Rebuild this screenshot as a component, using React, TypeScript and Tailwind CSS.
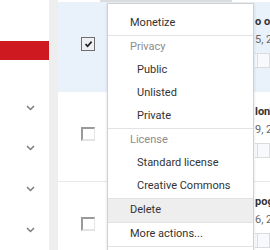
const rows = [
  { title: "o o", date: "5, 2", selected: true, checked: true },
  { title: "lon'", date: "9, 2", selected: false, checked: false },
  { title: "pog", date: "6, 2", selected: false, checked: false },
];

function Chevron() {
  return (
    <svg width="9" height="6" viewBox="0 0 9 6" fill="none">
      <path d="M1 1 L4.5 4.5 L8 1" stroke="#7b7b7b" strokeWidth="1.5" />
    </svg>
  );
}

function Checkbox({ checked }: { checked: boolean }) {
  if (checked)
    return (
      <div className="w-[14px] h-[14px] border border-[#6f6f6f] bg-[#eef0f3] flex items-center justify-center">
        <svg width="9" height="8" viewBox="0 0 9 8" fill="none">
          <path d="M1.5 4.2 L3.6 6.2 L7.6 1.6" stroke="#222" strokeWidth="1.7" />
        </svg>
      </div>
    );
  return (
    <div className="w-[14px] h-[14px] border-2 border-t-[#9a9a9a] border-l-[#9a9a9a] border-r-[#e4e4e4] border-b-[#e4e4e4] border-r bg-white" />
  );
}

function MenuItem({ label, sub, header, active }: { label: string; sub?: boolean; header?: boolean; active?: boolean }) {
  return (
    <div
      className={`h-[23px] flex items-center whitespace-nowrap ${sub ? "pl-[29px]" : "pl-[22px]"} ${
        header ? "text-[#8c8c8c]" : "text-[#333333]"
      } ${active ? "bg-[#eeeeee]" : ""}`}
    >
      {label}
    </div>
  );
}

function Divider() {
  return <div className="h-px bg-[#e2e2e2]" />;
}

export default function App() {
  return (
    <div className="relative w-[270px] h-[250px] overflow-hidden bg-white flex text-[11px] font-['Roboto','Liberation_Sans',sans-serif]">
      {/* sidebar, mostly cut off */}
      <div className="w-[49px] shrink-0 flex flex-col pt-[41px]">
        <div className="h-[21px] bg-[#cf1920]" />
        <div className="h-[29px]" />
        {[0, 1, 2, 3].map((i) => (
          <div key={i} className="h-[44px] flex items-center pl-[26px]">
            <Chevron />
          </div>
        ))}
      </div>
      <div className="w-[9px] shrink-0 bg-[#eeeeee]" />

      {/* video list */}
      <div className="flex-1 min-w-0 flex flex-col">
        <div className="h-[12px] flex">
          <div className="w-[42px]" />
          <div className="w-[40px] border border-[#dcdcdc] bg-[#f4f4f4]" />
          <div className="w-[46px] border border-[#dcdcdc] border-l-0" />
          <div className="w-[46px] border border-[#dcdcdc] border-l-0" />
        </div>
        {rows.map((r, i) => (
          <div
            key={i}
            className={`h-[90px] shrink-0 flex ${r.selected ? "bg-[#e9f1fb]" : "bg-white border-b border-[#e8e8e8]"}`}
          >
            <div className="w-[49px] shrink-0 pt-[35px] pl-[23px]">
              <Checkbox checked={r.checked} />
            </div>
            <div className="w-[148px] shrink-0" />
            <div className="flex-1 min-w-0 overflow-hidden pt-[13px] whitespace-nowrap">
              <div className="h-[14px] leading-[14px] font-bold text-[#333333]">{r.title}</div>
              <div className="h-[14px] leading-[14px] mt-[4px] text-[#666666]">{r.date}</div>
              <div className="h-[15px] mt-[6px] flex">
                <div className="w-[7px] border border-[#dcdcdc] border-l-0 bg-[#f7f9fc]" />
                <div className="w-[30px] border border-[#dcdcdc] border-l-0 bg-[#f7f9fc]" />
              </div>
            </div>
          </div>
        ))}
      </div>

      {/* actions menu */}
      <div className="absolute left-[107px] top-[3px] w-[147px] bg-white border border-[#d0d0d0] shadow-[0_1px_3px_rgba(0,0,0,0.12)] pt-[8px]">
        <MenuItem label="Monetize" />
        <Divider />
        <MenuItem label="Privacy" header />
        <MenuItem label="Public" sub />
        <MenuItem label="Unlisted" sub />
        <MenuItem label="Private" sub />
        <Divider />
        <MenuItem label="License" header />
        <MenuItem label="Standard license" sub />
        <MenuItem label="Creative Commons" sub />
        <Divider />
        <MenuItem label="Delete" active />
        <Divider />
        <MenuItem label="More actions..." />
        <Divider />
        <div className="h-[23px]" />
      </div>
    </div>
  );
}
